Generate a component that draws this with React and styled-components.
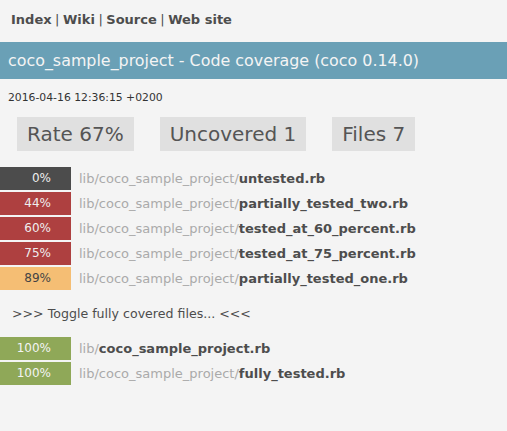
import React from "react";
import styled, { createGlobalStyle } from "styled-components";

const Global = createGlobalStyle`
  html, body { margin: 0; padding: 0; background: #f4f4f4; }
  body { font-family: "DejaVu Sans", sans-serif; color: #4d4d4d; }
`;

const Page = styled.div`
  display: flex;
  flex-direction: column;
  padding-bottom: 40px;
`;

const Nav = styled.nav`
  padding: 12px 11px 0;
  height: 30px;
  font-size: 13px;
  font-weight: bold;
  color: #4d4d4d;
  line-height: 16px;
`;

const NavLink = styled.a`
  color: inherit;
  text-decoration: none;
`;

const Sep = styled.span`
  font-weight: normal;
  margin: 0 3.5px;
`;

const Header = styled.h1`
  margin: 0;
  height: 37px;
  background: #6aa0b6;
  color: #f4f4f4;
  font-size: 15.9px;
  font-weight: normal;
  display: flex;
  align-items: center;
  padding: 0 8px;
`;

const Timestamp = styled.div`
  font-size: 10.8px;
  padding: 12px 8px 0;
  height: 26px;
  color: #333;
`;

const Stats = styled.div`
  display: flex;
  gap: 26px;
  padding: 0 17px;
`;

const Stat = styled.div`
  background: #e0e0e0;
  height: 34px;
  display: flex;
  align-items: center;
  padding: 0 10px;
  font-size: 20px;
  color: #555;
`;

const Table = styled.div`
  display: flex;
  flex-direction: column;
  gap: 2px;
  margin-top: ${(p) => p.$top}px;
`;

const Row = styled.div`
  display: flex;
  align-items: center;
  height: 23px;
`;

const Bar = styled.div`
  width: 71px;
  height: 100%;
  box-sizing: border-box;
  padding-right: 20px;
  text-align: right;
  line-height: 23px;
  font-size: 12px;
  background: ${(p) => p.$bg};
  color: ${(p) => p.$fg};
  flex: none;
`;

const File = styled.div`
  margin-left: 8px;
  font-size: 13px;
  color: #aaa;
  white-space: nowrap;
`;

const Name = styled.b`
  color: #4d4d4d;
`;

const Toggle = styled.div`
  margin-top: 16px;
  padding-left: 12px;
  font-size: 12.6px;
  line-height: 16px;
  color: #4d4d4d;
`;

const colors = {
  dark: ["#4c4c4c", "#eee"],
  red: ["#ae4040", "#eee"],
  orange: ["#f5be74", "#444"],
  green: ["#8fa858", "#f4f4f4"],
};

const partial = [
  ["0%", "dark", "lib/coco_sample_project/", "untested.rb"],
  ["44%", "red", "lib/coco_sample_project/", "partially_tested_two.rb"],
  ["60%", "red", "lib/coco_sample_project/", "tested_at_60_percent.rb"],
  ["75%", "red", "lib/coco_sample_project/", "tested_at_75_percent.rb"],
  ["89%", "orange", "lib/coco_sample_project/", "partially_tested_one.rb"],
];

const full = [
  ["100%", "green", "lib/", "coco_sample_project.rb"],
  ["100%", "green", "lib/coco_sample_project/", "fully_tested.rb"],
];

const FileRow = ({ pct, kind, dir, name }) => (
  <Row>
    <Bar $bg={colors[kind][0]} $fg={colors[kind][1]}>{pct}</Bar>
    <File>
      {dir}
      <Name>{name}</Name>
    </File>
  </Row>
);

export default function App() {
  return (
    <>
      <Global />
      <Page>
        <Nav>
          <NavLink href="#">Index</NavLink>
          <Sep>|</Sep>
          <NavLink href="#">Wiki</NavLink>
          <Sep>|</Sep>
          <NavLink href="#">Source</NavLink>
          <Sep>|</Sep>
          <NavLink href="#">Web site</NavLink>
        </Nav>
        <Header>coco_sample_project - Code coverage (coco 0.14.0)</Header>
        <Timestamp>2016-04-16 12:36:15 +0200</Timestamp>
        <Stats>
          <Stat>Rate 67%</Stat>
          <Stat>Uncovered 1</Stat>
          <Stat>Files 7</Stat>
        </Stats>
        <Table $top={16}>
          {partial.map(([p, k, d, n]) => (
            <FileRow key={n} pct={p} kind={k} dir={d} name={n} />
          ))}
        </Table>
        <Toggle>&gt;&gt;&gt; Toggle fully covered files... &lt;&lt;&lt;</Toggle>
        <Table $top={15}>
          {full.map(([p, k, d, n]) => (
            <FileRow key={n} pct={p} kind={k} dir={d} name={n} />
          ))}
        </Table>
      </Page>
    </>
  );
}
